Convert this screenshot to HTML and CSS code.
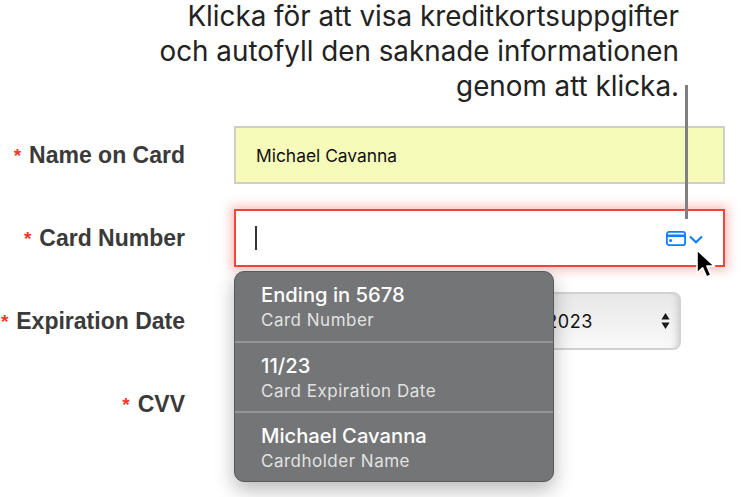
FILE: index.html
```html
<!DOCTYPE html>
<html lang="en">
<head>
<meta charset="utf-8">
<title>Card form</title>
<link rel="stylesheet" href="styles.css">
</head>
<body>
<div class="page">
  <p class="caption">Klicka för att visa kreditkortsuppgifter<br>och autofyll den saknade informationen<br>genom att klicka.</p>
  <div class="form">
    <div class="label"><span class="star">*</span>Name on Card</div>
    <div class="field filled">Michael Cavanna</div>
    <div class="label"><span class="star">*</span>Card Number</div>
    <div class="field error">
      <span class="cursor"></span>
      <svg class="card-icon" width="20" height="15" viewBox="0 0 20 15" fill="none" stroke="#0f7dff" stroke-width="1.8"><rect x="0.9" y="0.9" width="18.2" height="13.2" rx="2.2"/><path d="M1 4.8h18" stroke-width="2.6"/><circle cx="4.6" cy="9.6" r="1.5" fill="#0f7dff" stroke="none"/></svg>
      <svg class="chevron" width="14" height="9" viewBox="0 0 14 9" fill="none" stroke="#0f7dff" stroke-width="2.1"><path d="M1 1.4l6 5.8 6-5.8"/></svg>
    </div>
    <div class="label"><span class="star">*</span>Expiration Date</div>
    <div class="field select">
      <span class="year">2023</span>
      <svg class="updown" width="9" height="16" viewBox="0 0 9 16" fill="#1b1b1b"><path d="M4.5 0L8.6 6.6H0.4zM4.5 16L0.4 9.4H8.6z"/></svg>
    </div>
    <div class="label cvv"><span class="star">*</span>CVV</div>
  </div>
  <div class="leader"></div>
  <ul class="popup">
    <li class="item"><span class="main">Ending in 5678</span><span class="sub">Card Number</span></li>
    <li class="item"><span class="main">11/23</span><span class="sub">Card Expiration Date</span></li>
    <li class="item"><span class="main">Michael Cavanna</span><span class="sub">Cardholder Name</span></li>
  </ul>
  <svg class="pointer" width="24" height="34" viewBox="0 0 24 34"><path d="M4 2v23l5.6-5.2 4 9.2 4.4-1.9-4-9h7.6z" fill="#000" stroke="#fff" stroke-width="1.6" stroke-linejoin="round"/></svg>
</div>
</body>
</html>
```
FILE: styles.css
```css
* { box-sizing: border-box; }
html, body { margin: 0; padding: 0; background: #fff; }
.page {
  position: relative;
  width: 745px;
  height: 497px;
  overflow: hidden;
  font-family: Inter, "Liberation Sans", sans-serif;
}
.caption {
  margin: -1px 0 1px;
  width: 679px;
  height: 126px;
  text-align: right;
  font-size: 27.8px;
  line-height: 35px;
  color: #222;
  font-weight: 400;
}
.form {
  display: grid;
  grid-template-columns: 185px 491px;
  column-gap: 49px;
  grid-auto-rows: 58px;
  row-gap: 25px;
  align-items: center;
}
.label {
  font-family: "Liberation Sans", sans-serif;
  font-weight: 700;
  font-size: 23px;
  line-height: 26px;
  padding-top: 2px;
  color: #3a3a3a;
  text-align: right;
  white-space: nowrap;
}
.star {
  color: #f0392b;
  font-size: 19px;
  margin-right: 8px;
  position: relative;
  top: -1px;
}
.cvv { grid-column: 1; }
.field {
  height: 58px;
  display: flex;
  align-items: center;
  font-size: 17.4px;
  color: #111;
}
.filled {
  background: #f6fbb9;
  border: 2px solid #cfcfc8;
  padding-left: 20px;
  padding-top: 1px;
}
.error {
  background: #fff;
  border: 2px solid #f2453a;
  box-shadow: 0 0 10px 3px rgba(242, 69, 58, 0.35);
  padding-left: 19px;
}
.cursor {
  width: 2px;
  height: 24px;
  background: #333;
}
.card-icon { margin-left: auto; }
.chevron { margin-left: 3px; margin-right: 20px; margin-top: 2px; }
.select {
  width: 447px;
  justify-content: flex-end;
  border: 2px solid #d2d2d2;
  border-radius: 8px;
  background: linear-gradient(#e8e8e8, #f9f9f9);
  box-shadow: inset -7px 0 6px -5px #cfcfcf;
  padding-right: 9px;
}
.year {
  margin-right: 68px;
  font-size: 18px;
  letter-spacing: 0.6px;
}
.leader {
  position: absolute;
  left: 685px;
  top: 85px;
  width: 3px;
  height: 134px;
  background: #808080;
}
.popup {
  position: absolute;
  left: 234px;
  top: 271px;
  width: 320px;
  height: 211px;
  margin: 0;
  padding: 0;
  list-style: none;
  background: #737576;
  border: 1px solid #58595a;
  border-radius: 10px;
  box-shadow: 0 8px 20px rgba(0, 0, 0, 0.28);
  display: grid;
  grid-template-rows: 69px 70px 1fr;
  color: #fff;
}
.item {
  display: flex;
  flex-direction: column;
  padding: 10px 0 0 26px;
  border-top: 2px solid #949596;
}
.item:first-child { border-top: 0; padding-top: 10px; }
.main { font-size: 20.2px; line-height: 26px; font-weight: 500; }
.sub { font-size: 17px; line-height: 24px; letter-spacing: 0.5px; color: #e2e2e2; }
.pointer {
  position: absolute;
  left: 693px;
  top: 248px;
}
```
